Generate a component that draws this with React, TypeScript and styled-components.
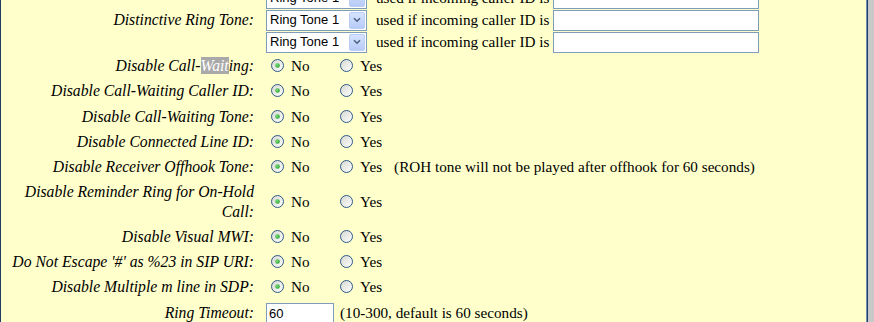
import React from 'react'
import styled, { createGlobalStyle } from 'styled-components'

const GlobalStyle = createGlobalStyle`
  html, body {
    margin: 0;
    padding: 0;
    background: #c8c8c8;
  }
  body {
    font-family: 'Liberation Serif', 'Times New Roman', serif;
    font-size: 16px;
    color: #000;
  }
`

const Frame = styled.div`
  display: flex;
  width: 874px;
  height: 322px;
  overflow: hidden;
`

const Panel = styled.div`
  width: 866px;
  background: #ffffcc;
  border-left: 1px solid #1f3d66;
  border-right: 1px solid #1f3d66;
  box-shadow: inset -1px 0 0 #6f8fb4;
  overflow: hidden;
`

const Form = styled.div`
  margin-top: -13px;
  display: flex;
  flex-direction: column;
`

const Row = styled.div<{ $tight?: boolean }>`
  display: grid;
  grid-template-columns: 253px 1fr;
  column-gap: 12px;
  align-items: center;
  padding: ${(p) => (p.$tight ? '0' : '3px 0')};
  min-height: ${(p) => (p.$tight ? '22px' : 'auto')};
`

const Label = styled.div`
  font-style: italic;
  font-size: 15.7px;
  text-align: right;
  line-height: 19.25px;
  padding-left: 8px;
`

const Selected = styled.span`
  background: #a9a9a9;
  color: #fff;
`

const Control = styled.div`
  display: flex;
  align-items: center;
  font-size: 15.2px;
  line-height: 19.25px;
  white-space: nowrap;
`

const SelectBox = styled.div`
  box-sizing: border-box;
  width: 101px;
  height: 21px;
  border: 1px solid #7f9db9;
  background: #fff;
  display: flex;
  align-items: center;
  justify-content: space-between;
  padding: 0 1px 0 3px;
  font-family: 'Liberation Sans', Arial, sans-serif;
  font-size: 13px;
`

const DropButton = styled.span`
  width: 16px;
  height: 17px;
  border-radius: 2px;
  background: linear-gradient(#d6e3fe, #b7cbf7);
  border: 1px solid #b9cdf6;
  box-sizing: border-box;
  display: flex;
  align-items: center;
  justify-content: center;
`

const Hint = styled.span<{ $gap: number }>`
  margin-left: ${(p) => p.$gap}px;
`

const TextBox = styled.div<{ $width: number }>`
  box-sizing: border-box;
  width: ${(p) => p.$width}px;
  height: 21px;
  border: 1px solid #7f9db9;
  background: #fff;
  font-family: 'Liberation Sans', Arial, sans-serif;
  font-size: 13px;
  line-height: 19px;
  padding-left: 2px;
  margin-left: ${(p) => (p.$width > 100 ? 4 : 0)}px;
`

const Option = styled.label<{ $width?: number }>`
  display: inline-flex;
  align-items: center;
  width: ${(p) => (p.$width ? `${p.$width}px` : 'auto')};
`

const RadioDot = styled.svg`
  margin: 0 7px 0 5px;
  flex: none;
`

function Radio({ checked }: { checked: boolean }) {
  return (
    <RadioDot width="13" height="13" viewBox="0 0 13 13">
      <defs>
        <linearGradient id={checked ? 'rgOn' : 'rgOff'} x1="0" y1="0" x2="1" y2="1">
          <stop offset="0" stopColor="#d6d6d0" />
          <stop offset="1" stopColor="#ffffff" />
        </linearGradient>
        <radialGradient id="dot" cx="0.4" cy="0.4" r="0.7">
          <stop offset="0" stopColor="#7ee07f" />
          <stop offset="1" stopColor="#1f9a24" />
        </radialGradient>
      </defs>
      <circle cx="6.5" cy="6.5" r="6" fill={`url(#${checked ? 'rgOn' : 'rgOff'})`} stroke="#2f5a86" strokeWidth="1" />
      {checked && <circle cx="6.5" cy="6.5" r="2.3" fill="url(#dot)" />}
    </RadioDot>
  )
}

function Chevron() {
  return (
    <svg width="8" height="6" viewBox="0 0 8 6">
      <path d="M1 1.2 L4 4.2 L7 1.2" fill="none" stroke="#4d6185" strokeWidth="1.6" />
    </svg>
  )
}

function RingSelect() {
  return (
    <Control>
      <SelectBox>
        Ring Tone 1
        <DropButton>
          <Chevron />
        </DropButton>
      </SelectBox>
      <Hint $gap={9}>used if incoming caller ID is</Hint>
      <TextBox $width={206} />
    </Control>
  )
}

function NoYes({ note }: { note?: string }) {
  return (
    <Control>
      <Option $width={69}>
        <Radio checked />
        No
      </Option>
      <Option>
        <Radio checked={false} />
        Yes
      </Option>
      {note && <Hint $gap={12}>{note}</Hint>}
    </Control>
  )
}

const radioRows: { label: React.ReactNode; note?: string }[] = [
  {
    label: (
      <>
        Disable Call-<Selected>Wait</Selected>ing:
      </>
    ),
  },
  { label: 'Disable Call-Waiting Caller ID:' },
  { label: 'Disable Call-Waiting Tone:' },
  { label: 'Disable Connected Line ID:' },
  {
    label: 'Disable Receiver Offhook Tone:',
    note: '(ROH tone will not be played after offhook for 60 seconds)',
  },
  { label: 'Disable Reminder Ring for On-Hold Call:' },
  { label: 'Disable Visual MWI:' },
  { label: "Do Not Escape '#' as %23 in SIP URI:" },
  { label: 'Disable Multiple m line in SDP:' },
]

export default function App() {
  return (
    <Frame>
      <GlobalStyle />
      <Panel>
        <Form>
          <Row $tight>
            <Label />
            <RingSelect />
          </Row>
          <Row $tight>
            <Label>Distinctive Ring Tone:</Label>
            <RingSelect />
          </Row>
          <Row $tight>
            <Label />
            <RingSelect />
          </Row>
          {radioRows.map((row, i) => (
            <Row key={i}>
              <Label>{row.label}</Label>
              <NoYes note={row.note} />
            </Row>
          ))}
          <Row>
            <Label>Ring Timeout:</Label>
            <Control>
              <TextBox $width={68}>60</TextBox>
              <Hint $gap={6}>(10-300, default is 60 seconds)</Hint>
            </Control>
          </Row>
        </Form>
      </Panel>
    </Frame>
  )
}
